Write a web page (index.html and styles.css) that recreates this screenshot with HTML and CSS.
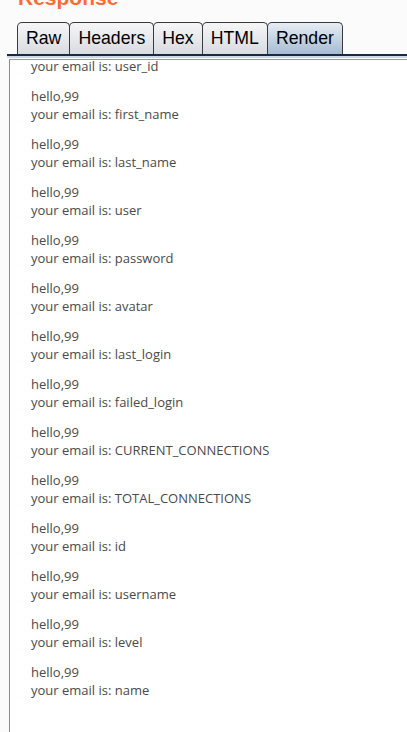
FILE: index.html
```html
<!DOCTYPE html>
<html>
<head>
<meta charset="utf-8">
<link rel="stylesheet" href="styles.css">
</head>
<body>
<div class="page">
  <h2 class="title">Response</h2>
  <div class="tabs">
    <div class="tab">Raw</div>
    <div class="tab">Headers</div>
    <div class="tab">Hex</div>
    <div class="tab">HTML</div>
    <div class="tab active">Render</div>
  </div>
  <div class="band"></div>
  <div class="panel">
    <div class="scroll">
      <div class="group"><div>hello,99</div><div>your email is: user_id</div></div>
      <div class="group"><div>hello,99</div><div>your email is: first_name</div></div>
      <div class="group"><div>hello,99</div><div>your email is: last_name</div></div>
      <div class="group"><div>hello,99</div><div>your email is: user</div></div>
      <div class="group"><div>hello,99</div><div>your email is: password</div></div>
      <div class="group"><div>hello,99</div><div>your email is: avatar</div></div>
      <div class="group"><div>hello,99</div><div>your email is: last_login</div></div>
      <div class="group"><div>hello,99</div><div>your email is: failed_login</div></div>
      <div class="group"><div>hello,99</div><div>your email is: CURRENT_CONNECTIONS</div></div>
      <div class="group"><div>hello,99</div><div>your email is: TOTAL_CONNECTIONS</div></div>
      <div class="group"><div>hello,99</div><div>your email is: id</div></div>
      <div class="group"><div>hello,99</div><div>your email is: username</div></div>
      <div class="group"><div>hello,99</div><div>your email is: level</div></div>
      <div class="group"><div>hello,99</div><div>your email is: name</div></div>
    </div>
  </div>
</div>
</body>
</html>
```
FILE: styles.css
```css
html, body {
  margin: 0;
  padding: 0;
  height: 100%;
  overflow: hidden;
  background: #fbfbfb;
}
.page {
  height: 100vh;
  display: flex;
  flex-direction: column;
  padding-left: 7px;
  box-sizing: border-box;
}
.title {
  margin: -14px 0 12px 11px;
  font-family: "Liberation Sans", Arial, sans-serif;
  font-weight: bold;
  font-size: 21px;
  line-height: 24px;
  color: #ff6a33;
}
.tabs {
  display: flex;
  padding-left: 10px;
  border-bottom: 2px solid #1b2a40;
}
.tab {
  height: 31px;
  box-sizing: content-box;
  padding: 0 8px;
  margin-right: -1px;
  border: 1px solid #3a3a3a;
  border-bottom: none;
  border-radius: 5px 5px 0 0;
  background: linear-gradient(#f6f6f7, #d9dbe0);
  font-family: "Liberation Sans", Arial, sans-serif;
  font-size: 17.7px;
  line-height: 31px;
  color: #000;
}
.tab.active {
  background: linear-gradient(#e6edf4, #a6bcd2);
}
.band {
  height: 2px;
  background: #cad8e7;
}
.panel {
  flex: 1;
  margin-left: 2px;
  margin-top: 1px;
  border-top: 1px solid #9a9a9a;
  border-left: 1px solid #8a8a8a;
  background: #fff;
  overflow: hidden;
}
.scroll {
  padding-left: 21px;
  margin-top: -21px;
  font-family: "Open Sans", sans-serif;
  font-size: 13px;
  line-height: 18px;
  color: #4a4a4a;
}
.group {
  margin-bottom: 12px;
}
```
